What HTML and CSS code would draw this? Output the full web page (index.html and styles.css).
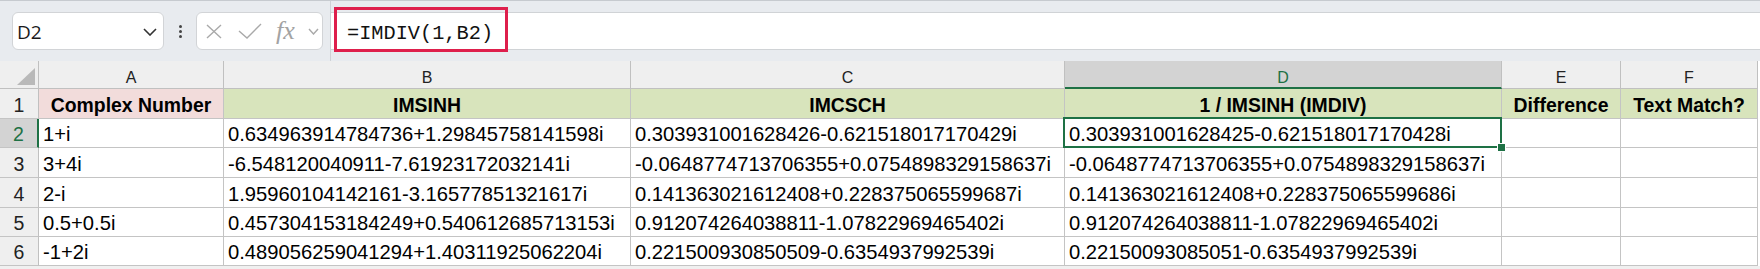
FILE: index.html
```html
<!DOCTYPE html>
<html>
<head>
    <meta charset="utf-8">
    <title>IMDIV vs IMCSCH</title>
    <link rel="stylesheet" href="styles.css">
</head>
<body>
    <!-- Formula bar -->
    <div class="toolbar">
        <div class="namebox">
            <span class="name">D2</span>
            <svg class="chev" width="14" height="8" viewBox="0 0 14 8"><path d="M1 1 L7 7 L13 1" /></svg>
        </div>
        <div class="grip"><span></span><span></span><span></span></div>
        <div class="fxbox">
            <svg class="ico" width="18" height="15" viewBox="0 0 18 15"><path d="M2 1 L16 14 M16 1 L2 14" /></svg>
            <svg class="ico check" width="24" height="16" viewBox="0 0 24 16"><path d="M1 8 L9 15 L23 1" /></svg>
            <span class="fx">fx</span>
            <svg class="ico chev-sm" width="11" height="7" viewBox="0 0 11 7"><path d="M1 1 L5.5 6 L10 1" /></svg>
        </div>
        <div class="formula-wrap">
            <div class="formula">
                <span class="highlight">=IMDIV(1,B2)</span>
            </div>
        </div>
    </div>

    <!-- Sheet -->
    <div class="sheet">
        <div class="corner"><svg width="18" height="17" viewBox="0 0 18 17"><path d="M18 0 L18 17 L0 17 Z" /></svg></div>
        <div class="col-head">A</div>
        <div class="col-head">B</div>
        <div class="col-head">C</div>
        <div class="col-head active">D</div>
        <div class="col-head">E</div>
        <div class="col-head">F</div>

        <div class="row-head">1</div>
        <div class="cell title pink">Complex Number</div>
        <div class="cell title green">IMSINH</div>
        <div class="cell title green">IMCSCH</div>
        <div class="cell title green">1 / IMSINH (IMDIV)</div>
        <div class="cell title green">Difference</div>
        <div class="cell title green">Text Match?</div>

        <div class="row-head active">2</div>
        <div class="cell">1+i</div>
        <div class="cell">0.634963914784736+1.29845758141598i</div>
        <div class="cell">0.303931001628426-0.621518017170429i</div>
        <div class="cell selected">0.303931001628425-0.621518017170428i<span class="handle"></span></div>
        <div class="cell"></div>
        <div class="cell"></div>

        <div class="row-head">3</div>
        <div class="cell">3+4i</div>
        <div class="cell">-6.548120040911-7.61923172032141i</div>
        <div class="cell">-0.0648774713706355+0.0754898329158637i</div>
        <div class="cell">-0.0648774713706355+0.0754898329158637i</div>
        <div class="cell"></div>
        <div class="cell"></div>

        <div class="row-head">4</div>
        <div class="cell">2-i</div>
        <div class="cell">1.95960104142161-3.16577851321617i</div>
        <div class="cell">0.141363021612408+0.228375065599687i</div>
        <div class="cell">0.141363021612408+0.228375065599686i</div>
        <div class="cell"></div>
        <div class="cell"></div>

        <div class="row-head">5</div>
        <div class="cell">0.5+0.5i</div>
        <div class="cell">0.457304153184249+0.540612685713153i</div>
        <div class="cell">0.912074264038811-1.07822969465402i</div>
        <div class="cell">0.912074264038811-1.07822969465402i</div>
        <div class="cell"></div>
        <div class="cell"></div>

        <div class="row-head">6</div>
        <div class="cell">-1+2i</div>
        <div class="cell">0.489056259041294+1.40311925062204i</div>
        <div class="cell">0.221500930850509-0.6354937992539i</div>
        <div class="cell">0.22150093085051-0.6354937992539i</div>
        <div class="cell"></div>
        <div class="cell"></div>
    </div>
    <div class="sheet-foot"></div>
</body>
</html>
```

FILE: styles.css
```css
body {
    margin: 0;
    padding: 0;
    width: 1760px;
    height: 269px;
    overflow: hidden;
    background: #ffffff;
    font-family: "Liberation Sans", Arial, sans-serif;
    color: #000;
}

/* ---------- formula bar ---------- */
.toolbar {
    display: flex;
    height: 61px;
    box-sizing: border-box;
    border-top: 1px solid #c6cacf;
    background: #e8ebef;
}
.namebox {
    display: flex;
    align-items: center;
    justify-content: space-between;
    box-sizing: border-box;
    width: 152px;
    height: 38px;
    margin: 11px 0 0 12px;
    padding: 1px 6px 0 4px;
    background: #fff;
    border: 1px solid #d2d4d7;
    border-radius: 6px;
}
.name {
    font-family: "Open Sans", "Noto Sans", sans-serif;
    font-size: 19px;
    color: #1a1a1a;
}
.chev path {
    fill: none;
    stroke: #333;
    stroke-width: 1.6;
}
.grip {
    display: flex;
    flex-direction: column;
    align-items: center;
    justify-content: center;
    gap: 2px;
    width: 32px;
    height: 38px;
    margin-top: 11px;
}
.grip span {
    width: 3px;
    height: 3px;
    border-radius: 50%;
    background: #444;
}
.fxbox {
    display: flex;
    align-items: center;
    box-sizing: border-box;
    width: 127px;
    height: 38px;
    margin-top: 11px;
    padding-left: 8px;
    background: #fff;
    border: 1px solid #d2d4d7;
    border-radius: 6px;
}
.ico path {
    fill: none;
    stroke: #a9a9a9;
    stroke-width: 1.4;
}
.check {
    margin-left: 15px;
}
.fx {
    display: inline-block;
    width: 22px;
    margin-left: 14px;
    font-family: "Liberation Serif", "Times New Roman", serif;
    font-style: italic;
    font-size: 26px;
    line-height: 26px;
    color: #a3a3a3;
}
.chev-sm {
    margin-left: 10px;
}
.formula-wrap {
    flex: 1;
    margin-left: 7px;
    padding-top: 11px;
    border-left: 1px solid #cfd2d6;
}
.formula {
    display: flex;
    align-items: flex-start;
    box-sizing: border-box;
    height: 38px;
    background: #fff;
    border-top: 1px solid #d0d3d6;
    border-bottom: 1px solid #d0d3d6;
}
.highlight {
    box-sizing: border-box;
    height: 45px;
    margin: -6px 0 0 3px;
    padding: 14px 12px 0 10px;
    border: 3px solid #de1f4c;
    font-family: "Liberation Mono", "Courier New", monospace;
    font-size: 20.3px;
    line-height: 20px;
    color: #111;
    white-space: nowrap;
}

/* ---------- sheet grid ---------- */
.sheet {
    display: grid;
    grid-template-columns: 39px 185px 407px 434px 437px 119px 137px;
    grid-template-rows: 28px 30px 29px 30px 30px 29px 29px;
}
.sheet > div {
    box-sizing: border-box;
    border-right: 1px solid #c4c4c4;
    border-bottom: 1px solid #c4c4c4;
    white-space: nowrap;
}
.corner {
    display: flex;
    align-items: flex-end;
    justify-content: flex-end;
    padding: 0 3px 3px 0;
    background: #efefef;
}
.sheet > .corner,
.sheet > .col-head {
    border-color: #c0c0c0;
}
.corner path {
    fill: #b9b9b9;
}
.col-head {
    display: flex;
    align-items: flex-end;
    justify-content: center;
    padding-bottom: 1px;
    background: #efefef;
    font-size: 16px;
    line-height: 18px;
    color: #222;
}
.sheet > .col-head.active {
    padding-bottom: 0;
    background: #d3d3d3;
    color: #1e7145;
    border-bottom: 2px solid #1e7145;
}
.row-head {
    display: flex;
    align-items: flex-end;
    justify-content: center;
    padding-bottom: 2px;
    background: #efefef;
    font-size: 19.5px;
    line-height: 22px;
    color: #222;
}
.sheet > .row-head {
    border-right-color: #c0c0c0;
}
.sheet > .row-head.active {
    background: #d3d3d3;
    color: #1e7145;
    border-right: 2px solid #1e7145;
}
.cell {
    display: flex;
    align-items: flex-end;
    padding: 0 0 2px 4px;
    font-size: 20.2px;
    line-height: 22px;
    background: #fff;
}
.title {
    justify-content: center;
    padding-left: 0;
    font-size: 19.4px;
    font-weight: bold;
}
.pink {
    background: #f2dcdb;
}
.green {
    background: #d8e4bc;
}
.selected {
    position: relative;
}
.selected::before {
    content: "";
    position: absolute;
    top: -2px;
    left: -2px;
    right: -1px;
    bottom: -1px;
    border: 2px solid #1e7145;
}
.handle {
    position: absolute;
    right: -5px;
    bottom: -5px;
    width: 7px;
    height: 7px;
    background: #1e7145;
    border: 1px solid #fff;
}
.sheet-foot {
    height: 3px;
    background: #f0f0f0;
}
```
